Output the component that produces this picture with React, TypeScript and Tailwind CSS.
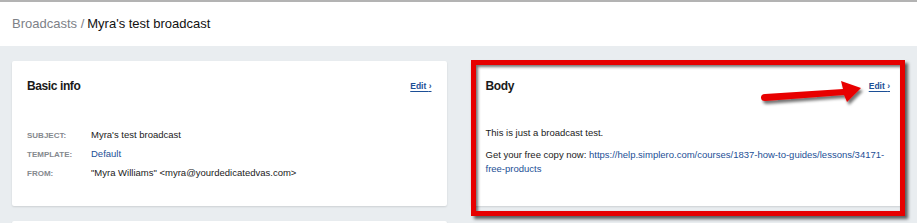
import React from 'react';

const font = { fontFamily: '"Liberation Sans", Arial, sans-serif' };

function EditLink() {
  return (
    <a className="text-[8.5px] font-bold text-[#1c4f96] underline underline-offset-[2px] decoration-[1px] cursor-pointer">
      Edit <span className="no-underline">›</span>
    </a>
  );
}

function CardHeader({ title }: { title: string }) {
  return (
    <div className="flex items-center justify-between h-[16px]">
      <h2 className="text-[12px] font-bold tracking-[-0.4px] text-[#1a1a1a]">{title}</h2>
      <EditLink />
    </div>
  );
}

function InfoRow({ label, children }: { label: string; children: React.ReactNode }) {
  return (
    <div className="flex items-center h-[19px]">
      <span className="w-[64px] text-[8px] font-bold uppercase text-[#85898e]">{label}</span>
      <span className="text-[9.5px] text-[#1a1a1a]">{children}</span>
    </div>
  );
}

function Arrow() {
  return (
    <svg className="absolute left-[288px] top-[16px]" width="110" height="34" viewBox="0 0 110 34">
      <defs>
        <filter id="sh" x="-10%" y="-30%" width="130%" height="170%">
          <feDropShadow dx="2" dy="3" stdDeviation="1.5" floodColor="#000" floodOpacity="0.55" />
        </filter>
      </defs>
      <path
        d="M6 17 L84 12 L82 4 L102 11 L88 25 L85 18 L6 24 Q2 24 2 20.5 Q2 17 6 17 Z"
        fill="#e80000"
        filter="url(#sh)"
      />
    </svg>
  );
}

export default function App() {
  return (
    <div style={font} className="w-[917px] h-[223px] overflow-hidden bg-[#e9edf0]">
      {/* Header */}
      <div className="h-[46px] bg-white border-t-2 border-[#b3b3b3] flex items-center px-3">
        <span className="text-[13px] text-[#7d8187]">Broadcasts /</span>
        <span className="text-[13px] text-[#111] ml-[3px]">Myra's test broadcast</span>
      </div>

      <div className="flex gap-6 px-3 pt-[15px]">
        {/* Left column */}
        <div className="flex-1 flex flex-col gap-[15px]">
          <div className="bg-white rounded-[2px] shadow-[0_1px_2px_rgba(0,0,0,0.12)] h-[145px] px-[15px] pt-[17px]">
            <CardHeader title="Basic info" />
            <div className="mt-[32px]">
              <InfoRow label="Subject:">Myra's test broadcast</InfoRow>
              <InfoRow label="Template:">
                <a className="text-[#1c4f96]">Default</a>
              </InfoRow>
              <InfoRow label="From:">"Myra Williams" &lt;myra@yourdedicatedvas.com&gt;</InfoRow>
            </div>
          </div>
          <div className="bg-white rounded-[2px] shadow-[0_1px_2px_rgba(0,0,0,0.12)] h-[60px]" />
        </div>

        {/* Right column */}
        <div className="flex-1 relative">
          <div className="bg-white rounded-[2px] shadow-[0_1px_2px_rgba(0,0,0,0.12)] h-[145px] px-[15px] pt-[17px]">
            <CardHeader title="Body" />
            <div className="mt-[32px] text-[9.5px] leading-[14px] text-[#1a1a1a]">
              <p>This is just a broadcast test.</p>
              <p className="mt-[8px]">
                Get your free copy now:{' '}
                <a className="text-[#1c4f96]">
                  https://help.simplero.com/courses/1837-how-to-guides/lessons/34171-free-products
                </a>
              </p>
            </div>
          </div>
          {/* annotation */}
          <div className="absolute left-0 right-0 -top-px h-[156px] border-[5px] border-[#e60000] shadow-[3px_3px_3px_rgba(0,0,0,0.6),inset_2px_2px_3px_rgba(0,0,0,0.55)]" />
          <Arrow />
        </div>
      </div>
    </div>
  );
}
